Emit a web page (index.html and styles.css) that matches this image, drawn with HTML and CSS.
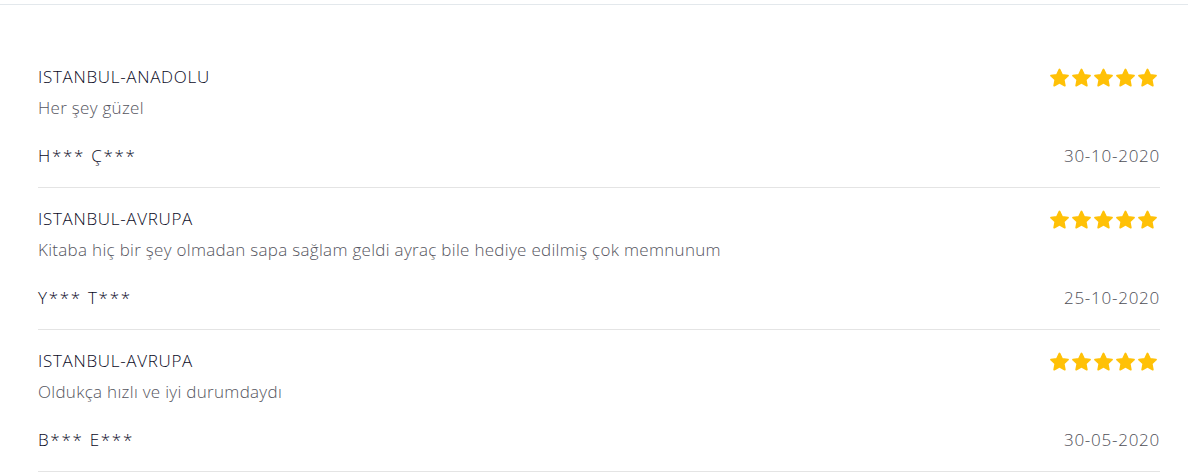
FILE: index.html
```html
<!DOCTYPE html>
<html lang="tr">
<head>
    <meta charset="UTF-8">
    <meta name="viewport" content="width=device-width, initial-scale=1.0">
    <title>Yorumlar</title>
    <link rel="stylesheet" href="styles.css">
</head>
<body>
    <div class="reviews">
        <div class="review">
            <div class="review-head">
                <span class="city">ISTANBUL-ANADOLU</span>
                <span class="stars">
                    <svg viewBox="0 0 20 20"><polygon points="10,1.5 12.6,6.8 18.5,7.6 14.2,11.7 15.3,17.6 10,14.8 4.7,17.6 5.8,11.7 1.5,7.6 7.4,6.8"/></svg>
                    <svg viewBox="0 0 20 20"><polygon points="10,1.5 12.6,6.8 18.5,7.6 14.2,11.7 15.3,17.6 10,14.8 4.7,17.6 5.8,11.7 1.5,7.6 7.4,6.8"/></svg>
                    <svg viewBox="0 0 20 20"><polygon points="10,1.5 12.6,6.8 18.5,7.6 14.2,11.7 15.3,17.6 10,14.8 4.7,17.6 5.8,11.7 1.5,7.6 7.4,6.8"/></svg>
                    <svg viewBox="0 0 20 20"><polygon points="10,1.5 12.6,6.8 18.5,7.6 14.2,11.7 15.3,17.6 10,14.8 4.7,17.6 5.8,11.7 1.5,7.6 7.4,6.8"/></svg>
                    <svg viewBox="0 0 20 20"><polygon points="10,1.5 12.6,6.8 18.5,7.6 14.2,11.7 15.3,17.6 10,14.8 4.7,17.6 5.8,11.7 1.5,7.6 7.4,6.8"/></svg>
                </span>
            </div>
            <p class="comment">Her şey güzel</p>
            <div class="review-foot">
                <span class="author">H*** Ç***</span>
                <span class="date">30-10-2020</span>
            </div>
        </div>

        <div class="review">
            <div class="review-head">
                <span class="city">ISTANBUL-AVRUPA</span>
                <span class="stars">
                    <svg viewBox="0 0 20 20"><polygon points="10,1.5 12.6,6.8 18.5,7.6 14.2,11.7 15.3,17.6 10,14.8 4.7,17.6 5.8,11.7 1.5,7.6 7.4,6.8"/></svg>
                    <svg viewBox="0 0 20 20"><polygon points="10,1.5 12.6,6.8 18.5,7.6 14.2,11.7 15.3,17.6 10,14.8 4.7,17.6 5.8,11.7 1.5,7.6 7.4,6.8"/></svg>
                    <svg viewBox="0 0 20 20"><polygon points="10,1.5 12.6,6.8 18.5,7.6 14.2,11.7 15.3,17.6 10,14.8 4.7,17.6 5.8,11.7 1.5,7.6 7.4,6.8"/></svg>
                    <svg viewBox="0 0 20 20"><polygon points="10,1.5 12.6,6.8 18.5,7.6 14.2,11.7 15.3,17.6 10,14.8 4.7,17.6 5.8,11.7 1.5,7.6 7.4,6.8"/></svg>
                    <svg viewBox="0 0 20 20"><polygon points="10,1.5 12.6,6.8 18.5,7.6 14.2,11.7 15.3,17.6 10,14.8 4.7,17.6 5.8,11.7 1.5,7.6 7.4,6.8"/></svg>
                </span>
            </div>
            <p class="comment">Kitaba hiç bir şey olmadan sapa sağlam geldi ayraç bile hediye edilmiş çok memnunum</p>
            <div class="review-foot">
                <span class="author">Y*** T***</span>
                <span class="date">25-10-2020</span>
            </div>
        </div>

        <div class="review">
            <div class="review-head">
                <span class="city">ISTANBUL-AVRUPA</span>
                <span class="stars">
                    <svg viewBox="0 0 20 20"><polygon points="10,1.5 12.6,6.8 18.5,7.6 14.2,11.7 15.3,17.6 10,14.8 4.7,17.6 5.8,11.7 1.5,7.6 7.4,6.8"/></svg>
                    <svg viewBox="0 0 20 20"><polygon points="10,1.5 12.6,6.8 18.5,7.6 14.2,11.7 15.3,17.6 10,14.8 4.7,17.6 5.8,11.7 1.5,7.6 7.4,6.8"/></svg>
                    <svg viewBox="0 0 20 20"><polygon points="10,1.5 12.6,6.8 18.5,7.6 14.2,11.7 15.3,17.6 10,14.8 4.7,17.6 5.8,11.7 1.5,7.6 7.4,6.8"/></svg>
                    <svg viewBox="0 0 20 20"><polygon points="10,1.5 12.6,6.8 18.5,7.6 14.2,11.7 15.3,17.6 10,14.8 4.7,17.6 5.8,11.7 1.5,7.6 7.4,6.8"/></svg>
                    <svg viewBox="0 0 20 20"><polygon points="10,1.5 12.6,6.8 18.5,7.6 14.2,11.7 15.3,17.6 10,14.8 4.7,17.6 5.8,11.7 1.5,7.6 7.4,6.8"/></svg>
                </span>
            </div>
            <p class="comment">Oldukça hızlı ve iyi durumdaydı</p>
            <div class="review-foot">
                <span class="author">B*** E***</span>
                <span class="date">30-05-2020</span>
            </div>
        </div>
    </div>
</body>
</html>
```

FILE: styles.css
```css
body {
    font-family: "Open Sans", Lato, sans-serif;
    font-weight: 350;
    font-size: 17px;
    background-color: #FFFFFF;
    margin: 0;
    padding-top: 4px;
}

.reviews {
    border-top: 1px solid #E3E8EC;
    padding: 41px 28px 0 38px;
}

.review {
    padding: 20px 0;
    border-bottom: 1px solid #E4E4E4;
}

.review-head, .review-foot {
    display: flex;
    justify-content: space-between;
    align-items: flex-start;
    height: 22px;
    line-height: 22px;
}

.city {
    color: #0A0A1E;
    letter-spacing: 0.7px;
}

.stars {
    display: flex;
    gap: 1px;
    margin-top: 2px;
    margin-right: 2px;
}

.stars svg {
    width: 21px;
    height: 20px;
    fill: #FFC107;
    stroke: #FFC107;
    stroke-width: 1.8;
    stroke-linejoin: round;
}

.comment {
    margin: 9px 0 0;
    line-height: 22px;
    color: #55555E;
    letter-spacing: 0.3px;
}

.review-foot {
    margin-top: 26px;
}

.author {
    color: #0A0A1E;
    letter-spacing: 1.7px;
}

.date {
    color: #4E4E56;
    letter-spacing: 0.75px;
}
```
